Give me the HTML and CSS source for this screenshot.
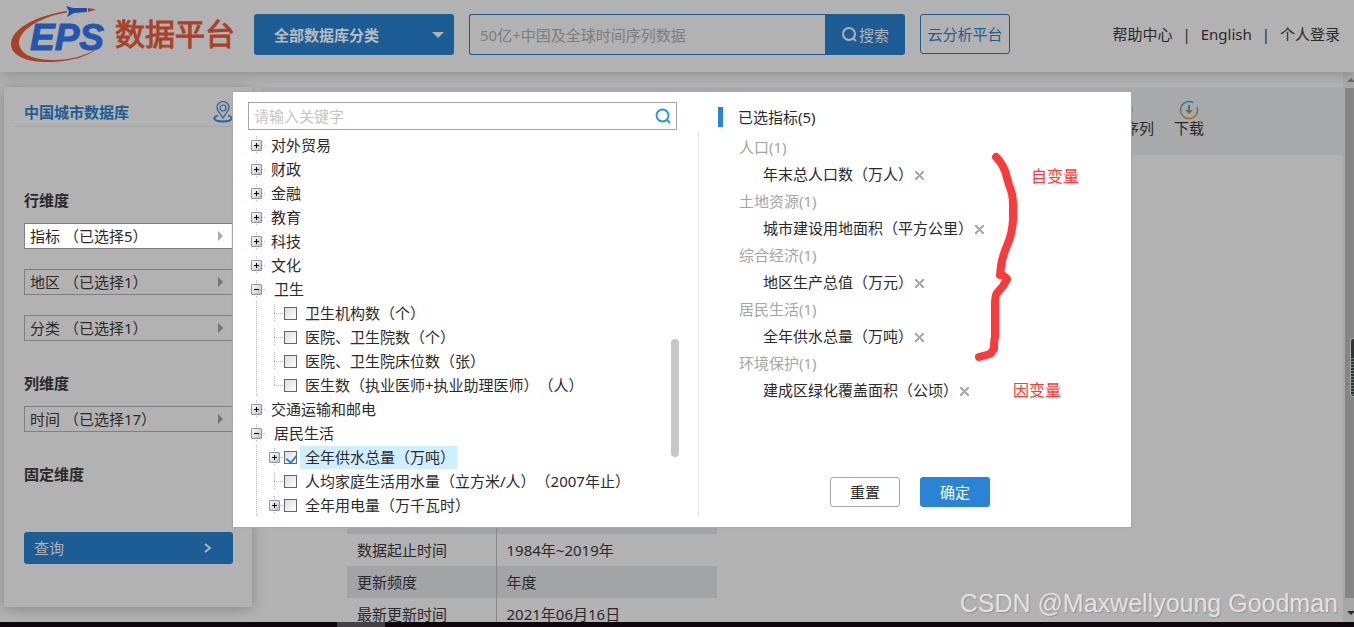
FILE: index.html
```html
<!DOCTYPE html>
<html lang="zh-CN">
<head>
<meta charset="utf-8">
<title>EPS数据平台</title>
<link rel="stylesheet" href="styles.css">
</head>
<body>
<header class="header">
  <a class="logo" href="#">
    <svg class="logo-mark" width="98" height="60" viewBox="8 4 98 60" aria-hidden="true">
      <path d="M67 11C34 16 10 30 11 45C12 57 30 63 52 62C71 61 87 57 97 49C84 56 70 60 55 60C34 60 20 55 19 43C19 30 40 17 67 12.500Z" fill="#aa4126"/>
      <path d="M66 6L73 8L87 8L87 12L74 13L67 17L69 11.500Z" fill="#1f4fa5"/>
      <path d="M88 8L96 9.500L88 12Z" fill="#aa4126"/>
      <text class="logo-eps" x="30" y="50">EPS</text>
    </svg>
    <span class="logo-name">数据平台</span>
  </a>
  <button class="category" type="button">全部数据库分类<span class="caret"></span></button>
  <form class="search">
    <input class="search-input" type="text" placeholder="50亿+中国及全球时间序列数据" aria-label="搜索数据">
    <button class="search-button" type="button">
      <svg width="17" height="17" viewBox="0 0 17 17" fill="none" stroke="currentColor" stroke-width="2"><circle cx="8" cy="8" r="6"/><path d="M12 12l3 3"/></svg>搜索
    </button>
  </form>
  <button class="cloud" type="button">云分析平台</button>
  <nav class="links">
    <a href="#">帮助中心</a><span>|</span><a href="#">English</a><span>|</span><a href="#">个人登录</a>
  </nav>
</header>

<main class="main">
  <aside class="sidebar">
    <div class="side-title">
      <h1>中国城市数据库</h1>
      <svg width="20" height="22" viewBox="0 0 20 22" fill="none" stroke="#2563a0" stroke-width="1.200"><path d="M10 17C7 12 4 10 4 6.500a6 6 0 0 1 12 0C16 10 13 12 10 17Z"/><circle cx="10" cy="7" r="3"/><path d="M5 14.500C-1 16 0 20.500 10 20.500S21 16 15 14.500" stroke-width="1.800"/></svg>
    </div>
    <section class="dims dims-row">
      <h2>行维度</h2>
      <button class="dim dim-active" type="button">指标 （已选择5）<span class="arrow"></span></button>
      <button class="dim" type="button">地区 （已选择1）<span class="arrow"></span></button>
      <button class="dim" type="button">分类 （已选择1）<span class="arrow"></span></button>
    </section>
    <section class="dims">
      <h2>列维度</h2>
      <button class="dim" type="button">时间 （已选择17）<span class="arrow"></span></button>
    </section>
    <section class="dims"><h2>固定维度</h2></section>
    <button class="query" type="button">查询
      <svg width="8" height="10" viewBox="0 0 8 10" fill="none" stroke="currentColor" stroke-width="2"><path d="M1 1l5 4-5 4"/></svg>
    </button>
  </aside>

  <section class="content">
    <div class="toolbar">
      <button class="tool" type="button">
        <svg width="20" height="20" viewBox="0 0 20 20" fill="none" stroke="#5d7f73" stroke-width="1.500"><circle cx="10" cy="10" r="8"/><path d="M10 5v5h4"/></svg>时间序列
      </button>
      <button class="tool" type="button">
        <svg width="20" height="20" viewBox="0 0 20 20" fill="none">
          <defs><linearGradient id="ring" x1="0" y1="0" x2="0" y2="1"><stop offset="0" stop-color="#1b7f9f"/><stop offset=".5" stop-color="#5f7867"/><stop offset="1" stop-color="#b5671a"/></linearGradient></defs>
          <path d="M14 2.500A8.500 8.500 0 1 0 18 7" stroke="url(#ring)" stroke-width="1.500"/>
          <path d="M9 5h2v5h3l-4 4-4-4h3Z" fill="#636d59"/>
        </svg>下载
      </button>
    </div>
    <table class="facts">
      <tbody>
        <tr><th scope="row"></th><td></td></tr>
        <tr><th scope="row">数据起止时间</th><td>1984年~2019年</td></tr>
        <tr><th scope="row">更新频度</th><td>年度</td></tr>
        <tr><th scope="row">最新更新时间</th><td>2021年06月16日</td></tr>
      </tbody>
    </table>
  </section>

  <div class="scrollbar" aria-hidden="true"><span class="scroll-up"></span><span class="scroll-thumb"></span><span class="scroll-down"></span></div>
</main>
<footer class="taskbar"><span></span></footer>

<div class="dialog" role="dialog" aria-label="选择指标">
  <div class="picker">
    <div class="keyword">
      <input type="text" placeholder="请输入关键字" aria-label="关键字">
      <button type="button" aria-label="搜索"><svg width="16" height="16" viewBox="0 0 16 16" fill="none" stroke="#2492ee" stroke-width="1.800"><circle cx="7.500" cy="7.500" r="6"/><path d="M11.500 11.500l3.500 3.500"/></svg></button>
    </div>
    <div class="tree-area">
      <ul class="tree">
        <li><div class="node"><span class="joint"><button class="toggle" type="button" aria-label="展开"></button></span><span class="name">对外贸易</span></div></li>
        <li><div class="node"><span class="joint"><button class="toggle" type="button" aria-label="展开"></button></span><span class="name">财政</span></div></li>
        <li><div class="node"><span class="joint"><button class="toggle" type="button" aria-label="展开"></button></span><span class="name">金融</span></div></li>
        <li><div class="node"><span class="joint"><button class="toggle" type="button" aria-label="展开"></button></span><span class="name">教育</span></div></li>
        <li><div class="node"><span class="joint"><button class="toggle" type="button" aria-label="展开"></button></span><span class="name">科技</span></div></li>
        <li><div class="node"><span class="joint"><button class="toggle" type="button" aria-label="展开"></button></span><span class="name">文化</span></div></li>
        <li><div class="node"><span class="joint"><button class="toggle open" type="button" aria-label="收起"></button></span><span class="name name-open">卫生</span></div>
          <ul class="branch">
            <li class="node"><span class="joint"></span><input id="a1" type="checkbox"><label for="a1">卫生机构数（个）</label></li>
            <li class="node"><span class="joint"></span><input id="a2" type="checkbox"><label for="a2">医院、卫生院数（个）</label></li>
            <li class="node"><span class="joint"></span><input id="a3" type="checkbox"><label for="a3">医院、卫生院床位数（张）</label></li>
            <li class="node"><span class="joint joint-last"></span><input id="a4" type="checkbox"><label for="a4">医生数（执业医师+执业助理医师）（人）</label></li>
          </ul>
        </li>
        <li><div class="node"><span class="joint"><button class="toggle" type="button" aria-label="展开"></button></span><span class="name">交通运输和邮电</span></div></li>
        <li><div class="node"><span class="joint"><button class="toggle open" type="button" aria-label="收起"></button></span><span class="name name-open">居民生活</span></div>
          <ul class="branch">
            <li class="node"><span class="joint"><button class="toggle" type="button" aria-label="展开"></button></span><input id="b1" type="checkbox" checked><label class="picked" for="b1">全年供水总量（万吨）</label></li>
            <li class="node"><span class="joint"></span><input id="b2" type="checkbox"><label for="b2">人均家庭生活用水量（立方米/人）（2007年止）</label></li>
            <li class="node"><span class="joint"><button class="toggle" type="button" aria-label="展开"></button></span><input id="b3" type="checkbox"><label for="b3">全年用电量（万千瓦时）</label></li>
          </ul>
        </li>
      </ul>
      <span class="tree-thumb"></span>
    </div>
  </div>
  <div class="chosen">
    <h2>已选指标(5)</h2>
    <dl>
      <dt>人口(1)</dt><dd>年末总人口数（万人）<button type="button" aria-label="移除"></button></dd>
      <dt>土地资源(1)</dt><dd>城市建设用地面积（平方公里）<button type="button" aria-label="移除"></button></dd>
      <dt>综合经济(1)</dt><dd>地区生产总值（万元）<button type="button" aria-label="移除"></button></dd>
      <dt>居民生活(1)</dt><dd>全年供水总量（万吨）<button type="button" aria-label="移除"></button></dd>
      <dt>环境保护(1)</dt><dd>建成区绿化覆盖面积（公顷）<button type="button" aria-label="移除"></button></dd>
    </dl>
    <div class="actions"><button class="reset" type="button">重置</button><button class="confirm" type="button">确定</button></div>
  </div>
  <svg class="brace" width="46" height="212" viewBox="974 151 46 212" fill="none" stroke="#fd3a39" stroke-width="8" stroke-linecap="round" stroke-linejoin="round" aria-hidden="true"><path d="M996 157Q1002 163 1005 171L1009 185Q1013 194 1013 204V220Q1012 234 1008 243Q1002 257 1001 266L1000 275Q1004 275 1007 279L1003 286L997 293Q995 296 995 304V337Q994 340 994 349L990 354L979 357"/></svg>
  <span class="note note-independent">自变量</span>
  <span class="note note-dependent">因变量</span>
</div>
<span class="watermark">CSDN @Maxwellyoung Goodman</span>
<span class="meter" aria-hidden="true"></span>
</body>
</html>
```
FILE: styles.css
```css
* { box-sizing: border-box; }
html, body { height: 100%; }
body {
  position: relative;
  display: flex;
  flex-direction: column;
  margin: 0;
  overflow: hidden;
  background: #b2b2b2;
  color: #2a2a2a;
  font: 15px/24px "Noto Sans", "Noto Sans CJK SC", sans-serif;
  text-spacing-trim: space-all;
}
button, input { font: inherit; color: inherit; margin: 0; }
button { padding: 0; border: 0; background: none; }
a { color: inherit; text-decoration: none; }
h1, h2, ul, dl, dd { margin: 0; padding: 0; }
h1, h2 { font-size: 15px; line-height: 24px; }
ul { list-style: none; }
svg { flex: none; }

/* header */
.header {
  position: relative;
  display: flex;
  align-items: flex-start;
  flex: none;
  height: 72px;
  padding: 14px 14px 0 8px;
  background: #b2b2b2;
  box-shadow: 0 2px 12px #8c8c8c;
}
.logo { display: flex; width: 246px; margin-top: -10px; gap: 9px; }
.logo-eps { font: italic bold 37px "Liberation Sans", sans-serif; fill: #2456b0; stroke: #2456b0; }
.logo-name {
  color: #aa4126;
  font-size: 30px;
  line-height: 60px;
  white-space: nowrap;
  -webkit-text-stroke: 1px #aa4126;
}
.category {
  display: flex;
  align-items: center;
  justify-content: space-between;
  width: 200px;
  height: 41px;
  padding: 0 10px 0 20px;
  border-radius: 3px;
  background: #1d5d95;
  color: #b8bcbf;
  font-weight: bold;
}
.caret { border: 6px solid transparent; border-top-color: #b2b2b2; border-bottom: 0; }
.search { display: flex; width: 436px; height: 41px; margin: 0 15px; }
.search-input {
  flex: 1;
  min-width: 0;
  padding: 0 10px;
  border: 1px solid #1d5d95;
  border-right: 0;
  border-radius: 3px 0 0 3px;
  background: transparent;
}
.search-input::placeholder { color: #7d7d7d; opacity: 1; }
.search-button {
  display: flex;
  align-items: center;
  justify-content: center;
  gap: 1px;
  width: 80px;
  border-radius: 0 3px 3px 0;
  background: #1d5d95;
  color: #b2b2b2;
}
.cloud { width: 90px; height: 40px; border: 1px solid #1d5d95; border-radius: 3px; color: #1d5d95; }
.links { display: flex; gap: 10px; margin: 8px 0 0 auto; }

/* page body */
.main { display: flex; flex: 1; min-height: 0; overflow: hidden; }
.sidebar {
  flex: none;
  width: 248px;
  height: 520px;
  margin: 15px 10px 0 4px;
  padding: 0 19px 0 20px;
  background: #b2b2b2;
  box-shadow: 0 2px 12px #888;
}
.side-title {
  display: flex;
  align-items: center;
  justify-content: space-between;
  height: 40px;
  margin: 0 0 0 -10px;
  padding: 12px 0 2px 10px;
  border-bottom: 1px solid #a5a5a5;
}
.side-title h1 { color: #1d5d95; }
.dims { display: flex; flex-direction: column; padding-bottom: 30px; }
.dims-row { padding-top: 61px; }
.dims h2 { margin-bottom: 11px; }
.dim {
  display: flex;
  align-items: center;
  justify-content: space-between;
  height: 26px;
  margin-bottom: 20px;
  padding: 0 10px 0 5px;
  border: 1px solid #808080;
  border-right: 0;
}
.dim:last-child { margin-bottom: 0; }
.dim-active { background: #fff; }
.dim .arrow { border: 5px solid transparent; border-left-color: #737373; border-right: 0; }
.dim-active .arrow { border-left-color: #aaa; }
.query {
  display: flex;
  align-items: center;
  justify-content: space-between;
  width: 209px;
  height: 32px;
  margin-top: 5px;
  padding: 0 21px 0 10px;
  border-radius: 3px;
  background: #1d5d95;
  color: #b2b2b2;
}
.content { flex: 1; min-width: 0; padding-top: 15px; }
.toolbar {
  display: flex;
  justify-content: flex-end;
  gap: 20px;
  height: 68px;
  padding: 13px 139px 0 0;
  background: #a7a9ab;
}
.tool { display: flex; flex-direction: column; align-items: center; height: 44px; line-height: 16px; }
.facts { width: 370px; margin: 347px 0 0 85px; border-collapse: collapse; table-layout: fixed; }
.facts tr { height: 32px; }
.facts tr:nth-child(odd) { background: #a2a4a6; }
.facts th, .facts td { padding: 0 10px; font-weight: normal; text-align: left; }
.facts th { width: 149px; border-right: 1px solid #888; }
.scrollbar {
  display: flex;
  flex-direction: column;
  align-items: flex-end;
  flex: none;
  width: 11px;
  background: #a8a8a8;
}
.scroll-up, .scroll-down { border: 4px solid transparent; margin-right: -1px; }
.scroll-up { margin-top: 6px; margin-bottom: 6px; border-top: 0; border-bottom-color: #666; }
.scroll-thumb { flex: 1; width: 9px; background: #858585; }
.scroll-down { margin-top: 13px; margin-bottom: 7px; border-bottom: 0; border-top-color: #2b2b2b; }
.taskbar { position: relative; flex: none; height: 5px; padding-left: 337px; background: #0e060a; }
.taskbar span { display: block; width: 48px; height: 5px; background: #454044; }

/* dialog */
.dialog {
  position: absolute;
  top: 92px;
  left: 233px;
  display: flex;
  width: 898px;
  padding: 10px 15px;
  background: #fff;
  box-shadow: 0 0 1px 1px #a6a8a9;
}
.picker { flex: none; width: 431px; }
.keyword { display: flex; width: 429px; height: 28px; padding: 0 5px; border: 1px solid #a5a5a5; }
.keyword input { flex: 1; min-width: 0; padding: 0; border: 0; outline: 0; }
.keyword input::placeholder { color: #c6c6c6; opacity: 1; }
.keyword button { display: flex; align-items: center; }
.tree-area { position: relative; padding-top: 3px; }
.node { display: flex; align-items: center; height: 24px; white-space: nowrap; }
.joint {
  display: flex;
  align-items: center;
  justify-content: center;
  flex: none;
  width: 18px;
  height: 18px;
  background:
    repeating-linear-gradient(#bbb 0 1px, transparent 1px 2px) 8px 0 / 1px 18px no-repeat,
    repeating-linear-gradient(90deg, #bbb 0 1px, transparent 1px 2px) 8px 9px / 9px 1px no-repeat;
}
.joint-last { background-size: 1px 9px, 9px 1px; }
.toggle {
  width: 11px;
  height: 11px;
  margin-right: 1px;
  border: 1px solid #7c9aba;
  border-radius: 1px;
  background:
    linear-gradient(#000, #000) center / 5px 1px no-repeat,
    linear-gradient(#000, #000) center / 1px 5px no-repeat,
    linear-gradient(135deg, #fff, #c5bdb0);
}
.toggle.open {
  background:
    linear-gradient(#000, #000) center / 5px 1px no-repeat,
    linear-gradient(135deg, #fff, #c5bdb0);
}
.name { padding-left: 5px; }
.name-open { padding-left: 8px; }
.branch {
  padding-left: 18px;
  background: repeating-linear-gradient(#bbb 0 1px, transparent 1px 2px) 8px 0 / 1px 100% no-repeat;
}
.node input {
  appearance: none;
  flex: none;
  width: 13px;
  height: 13px;
  margin-right: 3px;
  border: 1px solid #666;
  background: linear-gradient(135deg, #ddddd8, #fff);
}
.node input:checked::before {
  content: "";
  display: block;
  width: 5px;
  height: 8px;
  margin: 1px 0 0 3px;
  border: solid #1688e8;
  border-width: 0 2px 2px 0;
  transform: rotate(40deg);
}
.node label { padding: 0 5px; }
.node .picked { padding-right: 2px; background: #d0effe; line-height: 23px; }
.tree-thumb {
  position: absolute;
  top: 209px;
  right: 0;
  width: 8px;
  height: 118px;
  border-radius: 4px;
  background: #c7c7c7;
}
.chosen {
  display: flex;
  flex-direction: column;
  flex: 1;
  margin: 30px 0 0 19px;
  padding-left: 19px;
  border-left: 1px solid #e6e6e6;
}
.chosen h2 {
  height: 20px;
  margin-top: -25px;
  padding-left: 15px;
  border-left: 5px solid #2a84d6;
  font-weight: normal;
  line-height: 20px;
}
.chosen dl { padding: 7px 0 0 21px; line-height: 27px; }
.chosen dt { color: #a5a5a5; }
.chosen dd { display: flex; align-items: center; padding-left: 24px; }
.chosen dd button {
  width: 9px;
  height: 9px;
  margin: 2px 0 0 2px;
  background:
    linear-gradient(45deg, transparent 44%, #aaa 44% 56%, transparent 56%),
    linear-gradient(-45deg, transparent 44%, #aaa 44% 56%, transparent 56%);
}
.actions { display: flex; gap: 20px; margin: auto 0 10px 112px; }
.actions button { width: 70px; height: 30px; border-radius: 3px; }
.reset { border: 1px solid #a5a5a5; }
.confirm { background: #2a84d6; color: #fff; }
.brace { position: absolute; top: 59px; left: 741px; }
.note { position: absolute; color: #fd3a39; font-size: 16px; }
.note-independent { top: 72px; left: 798px; }
.note-dependent { top: 286px; left: 780px; }

.watermark {
  position: absolute;
  right: 16px;
  bottom: 9px;
  color: #e2e2e2;
  font: 25px/30px "Liberation Sans", sans-serif;
  text-shadow: 1px 1px 1px #929292;
}
.meter {
  position: absolute;
  top: 338px;
  right: -4px;
  width: 8px;
  height: 59px;
  border: 1px solid #aaa;
  border-radius: 3px;
  background: linear-gradient(#333 18px, transparent 18px), repeating-linear-gradient(#333 0 1px, #35a466 1px 2px, #333 2px 3px);
}
```
